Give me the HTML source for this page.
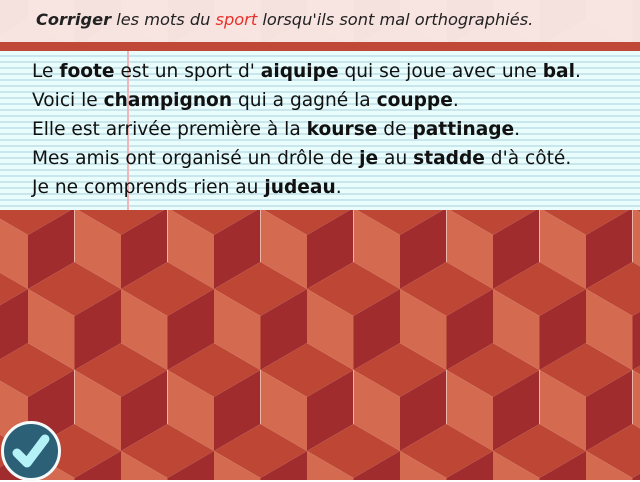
<!DOCTYPE html>
<html><head><meta charset="utf-8"><style>
body{margin:0;width:640px;height:480px;overflow:hidden;position:relative;font-family:"DejaVu Sans","Liberation Sans",sans-serif}
svg.bg{position:absolute;left:0;top:0}
.head{position:absolute;left:0;top:0;width:640px;height:42px;background:rgba(250,236,233,0.95)}
.strip{position:absolute;left:0;top:42px;width:640px;height:9px;background:#bf4836}
.head p{margin:0;position:absolute;left:36px;top:10px;font-style:italic;font-size:16.2px;color:#222;white-space:nowrap}
.paper{position:absolute;left:0;top:51px;width:640px;height:159px;background:repeating-linear-gradient(to bottom,#eafdfd 0,#eafdfd 4px,#c9e6ec 4px,#c9e6ec 6px)}
.margin{position:absolute;left:127px;top:51px;width:2px;height:159px;background:#f2b4b4}
.txt{position:absolute;left:32px;top:57px;font-size:18.6px;line-height:29px;color:#111;white-space:nowrap}
.chk{position:absolute;left:1px;top:421px;width:54px;height:54px;border-radius:50%;background:#2b6076;border:3px solid #f4fafa}
</style></head><body>
<svg class="bg" width="640" height="480" xmlns="http://www.w3.org/2000/svg">
<defs>
<g id="c"><polygon points="47,54 93.5,27 47,0 0.5,27" fill="#bd4635"/><polygon points="0.5,27 47,54 47,108 0.5,81" fill="#d46b50"/><polygon points="47,54 93.5,27 93.5,81 47,108" fill="#a02c2d"/></g>
<pattern id="p" x="-19" y="19" width="93" height="162" patternUnits="userSpaceOnUse">
<use href="#c"/>
<use href="#c" x="-46.5" y="81"/>
<use href="#c" x="46.5" y="81"/>
<use href="#c" x="-46.5" y="-81"/>
<use href="#c" x="46.5" y="-81"/>
<use href="#c" x="0" y="162"/>
<use href="#c" x="0" y="-162"/>
</pattern></defs>
<rect width="640" height="480" fill="url(#p)"/>
</svg>
<div class="head"><p><b>Corriger</b> les mots du <span style="color:#e8302a">sport</span> lorsqu'ils sont mal orthographiés.</p></div>
<div class="strip"></div>
<div class="paper"></div>
<div class="margin"></div>
<div class="txt">
Le <b>foote</b> est un sport d' <b>aiquipe</b> qui se joue avec une <b>bal</b>.<br>
Voici le <b>champignon</b> qui a gagné la <b>couppe</b>.<br>
Elle est arrivée première à la <b>kourse</b> de <b>pattinage</b>.<br>
Mes amis ont organisé un drôle de <b>je</b> au <b>stadde</b> d'à côté.<br>
Je ne comprends rien au <b>judeau</b>.
</div>
<div class="chk"><svg width="54" height="54" viewBox="0 0 54 54"><path d="M13 29 L23 39 L41 15" fill="none" stroke="#b4f2f8" stroke-width="9" stroke-linecap="round" stroke-linejoin="round"/></svg></div>
</body></html>
